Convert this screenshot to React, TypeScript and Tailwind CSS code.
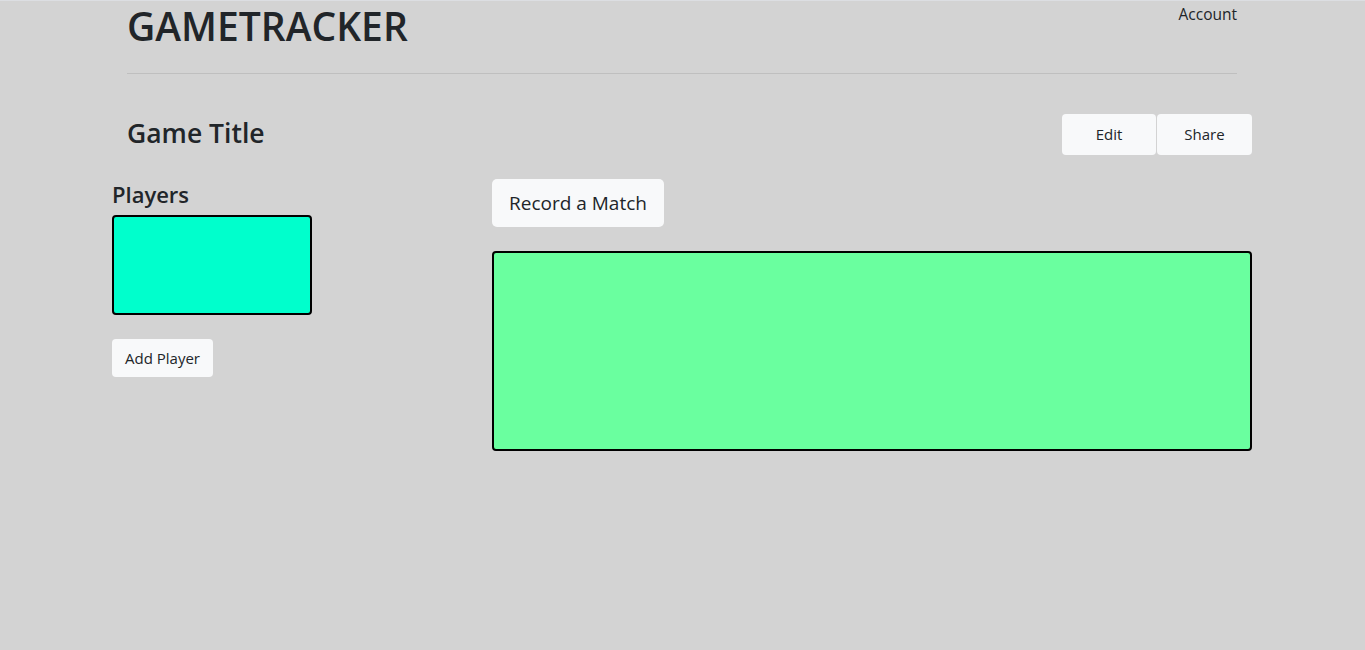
import React from 'react';

export default function App() {
  const font = { fontFamily: '"Open Sans", "Noto Sans", sans-serif' };
  return (
    <div className="min-h-[650px] bg-[#d3d3d3] text-[#212529] border-t border-[#dcdee2]" style={font}>
      <div className="ml-[112px] w-[1140px]">
        <div className="px-[15px]">
          <div className="flex justify-between items-start h-[73px] border-b border-[#bfbfbf]">
            <h1 className="text-[39px] leading-[44px] font-semibold mt-[3px]">GAMETRACKER</h1>
            <a className="text-[15.5px] leading-[20px] mt-[3px]">Account</a>
          </div>
        </div>

        <div className="flex justify-between items-center mt-[40px] pl-[15px]">
          <h3 className="text-[26.5px] leading-[40px] font-semibold -mt-[4px]">Game Title</h3>
          <div className="flex gap-px">
            <button className="w-[94px] h-[41px] bg-[#f8f9fa] rounded-[4px] text-[15px]">Edit</button>
            <button className="w-[95px] h-[41px] bg-[#f8f9fa] rounded-[4px] text-[15px]">Share</button>
          </div>
        </div>

        <div className="flex mt-[24px]">
          <div className="w-[380px]">
            <h4 className="text-[22px] leading-[30px] font-semibold">Players</h4>
            <div className="w-[200px] h-[100px] mt-[6px] bg-[#00ffcc] border-2 border-black rounded-[4px]" />
            <button className="mt-[24px] h-[38px] px-[13px] bg-[#f8f9fa] rounded-[4px] text-[15px]">Add Player</button>
          </div>
          <div className="flex-1">
            <button className="h-[48px] px-[17px] bg-[#f8f9fa] rounded-[5px] text-[19px]">Record a Match</button>
            <div className="mt-[24px] h-[200px] bg-[#6aff9f] border-2 border-black rounded-[4px]" />
          </div>
        </div>
      </div>
    </div>
  );
}
